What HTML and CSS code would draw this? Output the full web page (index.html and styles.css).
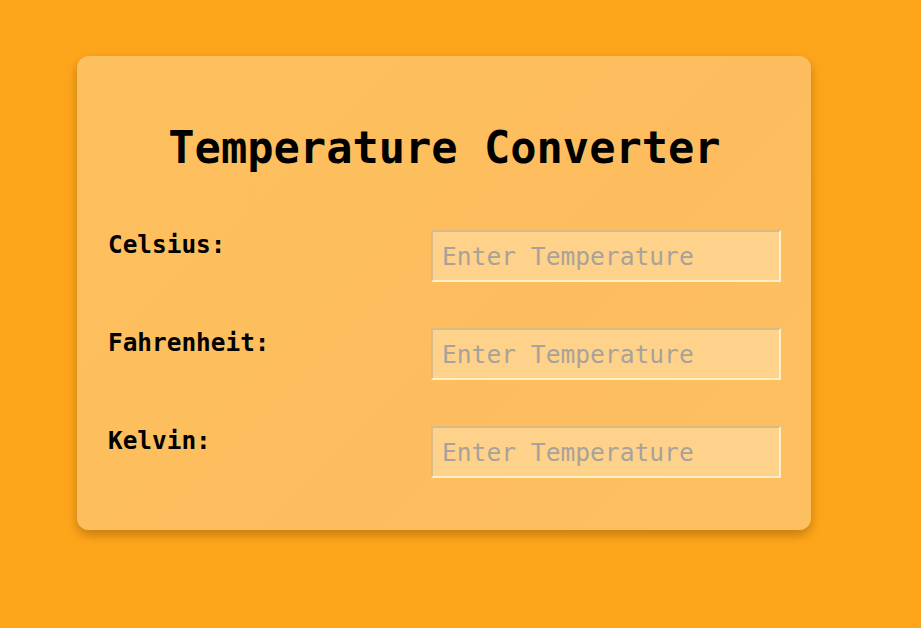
FILE: index.html
```html
<!DOCTYPE html>
<html>
<head>
<meta charset="utf-8">
<link rel="stylesheet" href="styles.css">
</head>
<body>
<div class="card">
  <h1 class="title">Temperature Converter</h1>
  <div class="rows">
    <div class="row">
      <label class="label" for="c">Celsius:</label>
      <input class="field" id="c" type="text" placeholder="Enter Temperature">
    </div>
    <div class="row">
      <label class="label" for="f">Fahrenheit:</label>
      <input class="field" id="f" type="text" placeholder="Enter Temperature">
    </div>
    <div class="row">
      <label class="label" for="k">Kelvin:</label>
      <input class="field" id="k" type="text" placeholder="Enter Temperature">
    </div>
  </div>
</div>
</body>
</html>
```
FILE: styles.css
```css
html, body {
  margin: 0;
  height: 100%;
}
body {
  background: #fea61b;
  font-family: "DejaVu Sans Mono", monospace;
  padding: 56px 0 0 77px;
  box-sizing: border-box;
}
.card {
  width: 734px;
  box-sizing: border-box;
  padding: 66px 30px 52px 31px;
  background: linear-gradient(135deg, #fdc05f 0%, #fdbd5e 60%, #fdc061 100%);
  border-radius: 12px;
  box-shadow: 0 5px 11px rgba(110, 60, 0, 0.4);
}
.title {
  margin: 0 0 57px;
  text-align: center;
  font-size: 43.7px;
  font-weight: bold;
  line-height: 51px;
  color: #000;
}
.rows {
  display: flex;
  flex-direction: column;
  gap: 46px;
}
.row {
  display: flex;
  justify-content: space-between;
  align-items: flex-start;
}
.label {
  font-size: 24.4px;
  font-weight: bold;
  line-height: 29px;
  color: #000;
}
.field {
  width: 350px;
  height: 52px;
  box-sizing: border-box;
  padding: 0 9px;
  font-family: "DejaVu Sans Mono", monospace;
  font-size: 24.6px;
  background: #ffd28b;
  border: 2px solid;
  border-color: #d9bb88 #fff0c6 #fff0c6 #d9bb88;
  outline: none;
  color: #000;
}
.field::placeholder {
  color: #a8a29a;
}
```
